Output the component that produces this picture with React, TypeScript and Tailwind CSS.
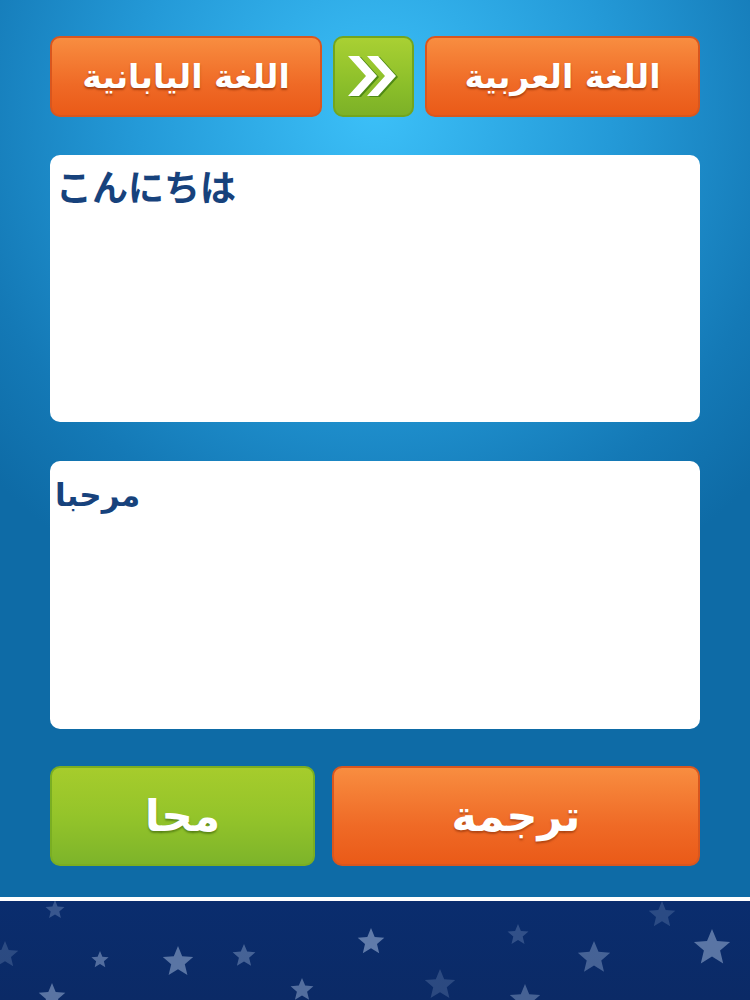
import React from "react";

const arabicFont = { fontFamily: '"DejaVu Sans", "Noto Sans", sans-serif' };

function Stars() {
  const stars: [number, number, number, number][] = [
    [55, 910, 10, 0.35],
    [100, 960, 9, 0.55],
    [178, 962, 16, 0.6],
    [244, 956, 12, 0.45],
    [52, 997, 14, 0.6],
    [371, 942, 14, 0.65],
    [302, 990, 12, 0.55],
    [518, 935, 11, 0.3],
    [594, 958, 17, 0.45],
    [712, 948, 19, 0.6],
    [662, 915, 14, 0.25],
    [440, 985, 16, 0.25],
    [525, 1000, 16, 0.45],
    [5, 955, 14, 0.25],
  ];
  const starPath = (cx: number, cy: number, r: number) => {
    const pts: string[] = [];
    for (let i = 0; i < 10; i++) {
      const rad = i % 2 === 0 ? r : r * 0.45;
      const a = -Math.PI / 2 + (i * Math.PI) / 5;
      pts.push(`${(cx + rad * Math.cos(a)).toFixed(1)},${(cy + rad * Math.sin(a)).toFixed(1)}`);
    }
    return pts.join(" ");
  };
  return (
    <svg className="absolute inset-0" width="750" height="99" viewBox="0 901 750 99">
      {stars.map(([x, y, r, o], i) => (
        <polygon key={i} points={starPath(x, y, r)} fill="#8fa6cc" opacity={o} />
      ))}
    </svg>
  );
}

function Chevrons() {
  return (
    <svg width="56" height="48" viewBox="0 0 56 48">
      <polygon points="4,4 15,4 33,24 15,44 4,44 22,24" fill="#4f8a14" />
      <polygon points="2,3 13,3 31,23 13,43 2,43 20,23" fill="#ffffff" />
      <polygon points="23,4 34,4 52,24 34,44 23,44 41,24" fill="#4f8a14" />
      <polygon points="21,3 32,3 50,23 32,43 21,43 39,23" fill="#ffffff" />
    </svg>
  );
}

export default function App() {
  return (
    <div className="w-[750px] h-[1000px] flex flex-col overflow-hidden">
      <div className="h-[897px] bg-[radial-gradient(ellipse_70%_60%_at_50%_12%,#3cc0f8_0%,#249ad8_45%,#1479b6_80%,#0e6ba6_100%)] px-[50px] pt-[36px] flex flex-col">
        <div className="flex gap-[11px] h-[81px]">
          <div
            className="w-[272px] rounded-[10px] border-2 border-[#d9561e] bg-[linear-gradient(#f88d40,#ef6a26_60%,#ea5a18)] flex items-center justify-center text-white font-bold text-[33px] [text-shadow:0_2px_2px_rgba(140,50,10,0.7)]"
            style={arabicFont}
            dir="rtl"
          >
            اللغة اليابانية
          </div>
          <div className="w-[81px] rounded-[10px] border-2 border-[#72a51e] bg-[linear-gradient(#a9d033,#8cbf2a_60%,#7cb127)] flex items-center justify-center">
            <Chevrons />
          </div>
          <div
            className="flex-1 rounded-[10px] border-2 border-[#d9561e] bg-[linear-gradient(#f88d40,#ef6a26_60%,#ea5a18)] flex items-center justify-center text-white font-bold text-[33px] [text-shadow:0_2px_2px_rgba(140,50,10,0.7)]"
            style={arabicFont}
            dir="rtl"
          >
            اللغة العربية
          </div>
        </div>

        <div className="mt-[38px] h-[267px] bg-white rounded-[10px] px-[6px] pt-[8px]">
          <div
            className="text-[#17427c] text-[36px] font-bold leading-[44px]"
            style={{ fontFamily: '"Noto Sans CJK JP", "Noto Sans", sans-serif' }}
          >
            こんにちは
          </div>
        </div>

        <div className="mt-[39px] h-[268px] bg-white rounded-[10px] px-[5px] pt-[12px]">
          <div className="text-[#17427c] text-[31px] font-bold leading-[44px] text-left" style={arabicFont}>
            <span dir="rtl">مرحبا</span>
          </div>
        </div>

        <div className="mt-[37px] flex gap-[17px] h-[100px]">
          <div
            className="w-[265px] rounded-[10px] border-2 border-[#7aae22] bg-[linear-gradient(#a6cc2c,#94c42a_50%,#7db42a)] flex items-center justify-center text-white font-bold text-[44px] [text-shadow:0_2px_2px_rgba(60,100,10,0.6)]"
            style={arabicFont}
            dir="rtl"
          >
            محا
          </div>
          <div
            className="flex-1 rounded-[10px] border-2 border-[#d9561e] bg-[linear-gradient(#f88d40,#ef6a26_60%,#ea5a18)] flex items-center justify-center text-white font-bold text-[43px] [text-shadow:0_2px_2px_rgba(140,50,10,0.6)]"
            style={arabicFont}
            dir="rtl"
          >
            ترجمة
          </div>
        </div>
      </div>
      <div className="h-[4px] bg-white" />
      <div className="relative h-[99px] bg-[linear-gradient(#0a2d6e,#0b2a66)]">
        <Stars />
      </div>
    </div>
  );
}
